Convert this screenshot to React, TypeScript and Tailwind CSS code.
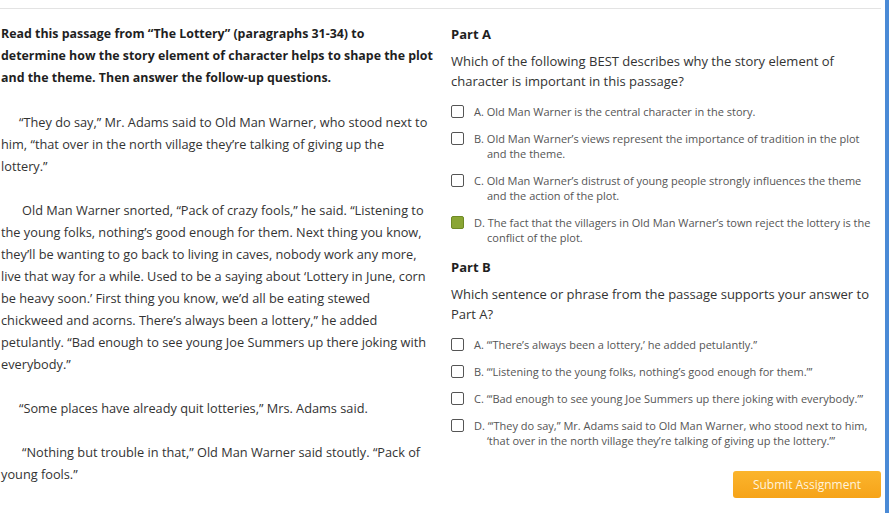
const partA = [
  { letter: "A.", text: "Old Man Warner is the central character in the story." },
  { letter: "B.", text: "Old Man Warner’s views represent the importance of tradition in the plot and the theme." },
  { letter: "C.", text: "Old Man Warner’s distrust of young people strongly influences the theme and the action of the plot." },
  { letter: "D.", text: "The fact that the villagers in Old Man Warner’s town reject the lottery is the conflict of the plot.", checked: true },
];

const partB = [
  { letter: "A.", text: "“‘There’s always been a lottery,’ he added petulantly.”" },
  { letter: "B.", text: "“‘Listening to the young folks, nothing’s good enough for them.’”" },
  { letter: "C.", text: "“‘Bad enough to see young Joe Summers up there joking with everybody.’”" },
  { letter: "D.", text: "“‘They do say,” Mr. Adams said to Old Man Warner, who stood next to him, ‘that over in the north village they’re talking of giving up the lottery.’”" },
];

function Option({ letter, text, checked }: { letter: string; text: string; checked?: boolean }) {
  return (
    <div className="flex items-start">
      <span
        className={
          "mt-[1px] w-[13px] h-[13px] shrink-0 rounded-[2px] border " +
          (checked ? "bg-[#8aa634] border-[#6f8a25]" : "bg-white border-[#555]")
        }
      />
      <p className="ml-[10px] pl-[13px] -indent-[13px] text-[11px] leading-[15px] text-[#555]">
        {letter} {text}
      </p>
    </div>
  );
}

export default function App() {
  return (
    <div className="w-[894px] h-[513px] bg-white overflow-hidden flex font-['Open_Sans',sans-serif]">
      <div className="w-[885px] pt-[8px]">
        <div className="border-t border-[#e3e3e3] w-[881px] flex pt-[14px]">
          <div className="w-[431px] shrink-0 pl-[1px] text-[12.75px] leading-[22px] text-[#333]">
            <p className="font-bold text-[12.4px] whitespace-nowrap text-[#1f1f1f]">
              Read this passage from “The Lottery” (paragraphs 31-34) to
              <br />
              determine how the story element of character helps to shape the plot
              <br />
              and the theme. Then answer the follow-up questions.
            </p>
            <p className="mt-[22px] indent-[18px]">
              “They do say,” Mr. Adams said to Old Man Warner, who stood next to him, “that over in the north village they’re talking of giving up the lottery.”
            </p>
            <p className="mt-[22px] indent-[21px]">
              Old Man Warner snorted, “Pack of crazy fools,” he said. “Listening to the young folks, nothing’s good enough for them. Next thing you know, they’ll be wanting to go back to living in caves, nobody work any more, live that way for a while. Used to be a saying about ‘Lottery in June, corn be heavy soon.’ First thing you know, we’d all be eating stewed chickweed and acorns. There’s always been a lottery,” he added petulantly. “Bad enough to see young Joe Summers up there joking with everybody.”
            </p>
            <p className="mt-[22px] indent-[18px]">
              “Some places have already quit lotteries,” Mrs. Adams said.
            </p>
            <p className="mt-[22px] indent-[21px]">
              “Nothing but trouble in that,” Old Man Warner said stoutly. “Pack of young fools.”
            </p>
          </div>
          <div className="ml-[20px] w-[430px] shrink-0 flex flex-col">
            <p className="text-[13px] leading-[22px] font-bold text-[#1f1f1f]">Part A</p>
            <p className="mt-[6px] text-[13px] leading-[20px] text-[#333]">
              Which of the following BEST describes why the story element of character is important in this passage?
            </p>
            <div className="mt-[13px] flex flex-col gap-[12px]">
              {partA.map((o) => (
                <Option key={o.letter} {...o} />
              ))}
            </div>
            <p className="mt-[11px] text-[13px] leading-[22px] font-bold text-[#1f1f1f]">Part B</p>
            <p className="mt-[6px] text-[13px] leading-[20px] text-[#333]">
              Which sentence or phrase from the passage supports your answer to Part A?
            </p>
            <div className="mt-[13px] flex flex-col gap-[12px]">
              {partB.map((o) => (
                <Option key={o.letter} {...o} />
              ))}
            </div>
            <div className="mt-[23px] flex justify-end">
              <button className="w-[148px] h-[27px] rounded-[3px] bg-gradient-to-b from-[#fbb52c] to-[#f6a318] text-[12px] text-[#fff3dc]">
                Submit Assignment
              </button>
            </div>
          </div>
        </div>
      </div>
      <div className="w-[4px] h-full bg-[#4a8ad6]" />
    </div>
  );
}
